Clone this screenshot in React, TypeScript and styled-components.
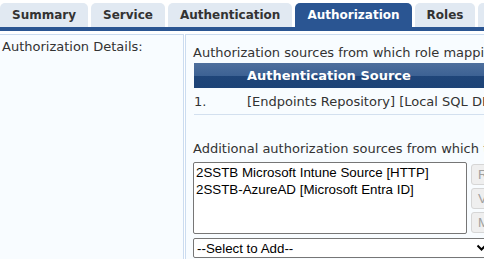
import styled, { createGlobalStyle } from "styled-components";

const GlobalStyle = createGlobalStyle`
  html, body {
    margin: 0;
    padding: 0;
    overflow: hidden;
    background: #ffffff;
  }
  body {
    font-family: "DejaVu Sans", Verdana, sans-serif;
    font-size: 13px;
    color: #333333;
  }
`;

const TabBar = styled.div`
  display: flex;
  align-items: flex-end;
  gap: 3px;
  padding-top: 3px;
  border-bottom: 4px solid #2a5592;
  white-space: nowrap;
`;

const Tab = styled.div<{ $active?: boolean }>`
  height: 24px;
  line-height: 24px;
  padding: 0 12px;
  flex-shrink: 0;
  border-radius: 5px 5px 0 0;
  font-size: 12px;
  font-weight: bold;
  background: ${(p) => (p.$active ? "#2a5592" : "#e1e9f2")};
  color: ${(p) => (p.$active ? "#ffffff" : "#333333")};
`;

const Content = styled.div`
  display: flex;
  gap: 1px;
  margin-top: 3px;
`;

const LabelCell = styled.div`
  width: 181px;
  flex-shrink: 0;
  padding: 4px 0 0 2px;
  border-top: 1px solid #cbdcf0;
  border-right: 1px solid #cbdcf0;
  background: #f8fcff;
  height: 260px;
  line-height: 16px;
`;

const ValueCell = styled.div`
  flex: 1;
  min-width: 0;
  padding: 10px 0 0 7px;
  border-top: 1px solid #cbdcf0;
  border-left: 1px solid #cbdcf0;
  background: #f8fcff;
  white-space: nowrap;
`;

const Caption = styled.div`
  line-height: 16px;
  margin-bottom: 2px;
`;

const SourceTable = styled.div`
  width: 420px;
  margin-left: 1px;
`;

const HeaderRow = styled.div`
  display: flex;
  height: 25px;
  align-items: center;
  background: linear-gradient(
    to bottom,
    #4e6f9d 0%,
    #3d6294 50%,
    #1f4579 52%,
    #1d4377 100%
  );
  color: #ffffff;
  font-weight: bold;
`;

const Row = styled.div`
  display: flex;
  height: 26px;
  align-items: center;
  border-bottom: 1px solid #d3e0ef;
`;

const IndexCol = styled.div`
  width: 53px;
  flex-shrink: 0;
`;

const NameCol = styled.div`
  flex: 1;
`;

const SubCaption = styled(Caption)`
  margin-top: 26px;
  margin-bottom: 5px;
`;

const ListRow = styled.div`
  display: flex;
  gap: 4px;
`;

const ListBox = styled.div`
  width: 272px;
  height: 69px;
  flex-shrink: 0;
  padding-top: 1px;
  border: 1px solid #767676;
  border-radius: 2px;
  background: #ffffff;
  font-family: "Liberation Sans", Arial, sans-serif;
  font-size: 13.33px;
  color: #000000;
`;

const Option = styled.div`
  padding: 0 2px;
  line-height: 17px;
`;

const ButtonCol = styled.div`
  display: flex;
  flex-direction: column;
  gap: 3px;
  padding-top: 2px;
`;

const SideButton = styled.div`
  height: 19px;
  width: 80px;
  padding-left: 6px;
  border: 1px solid #d6d6d6;
  border-radius: 3px;
  background: #efefef;
  color: #a0a0a0;
  font-family: "Liberation Sans", Arial, sans-serif;
  font-size: 13.33px;
  line-height: 19px;
`;

const Dropdown = styled.div`
  display: flex;
  align-items: center;
  justify-content: space-between;
  width: 290px;
  height: 18px;
  margin-top: 4px;
  padding: 0 4px 0 3px;
  border: 1px solid #767676;
  border-radius: 2px;
  background: #ffffff;
  font-family: "Liberation Sans", Arial, sans-serif;
  font-size: 13.33px;
  color: #000000;
`;

const tabs = [
  "Summary",
  "Service",
  "Authentication",
  "Authorization",
  "Roles",
  "Enforcement",
];

export default function App() {
  return (
    <>
      <GlobalStyle />
      <TabBar>
        {tabs.map((t) => (
          <Tab key={t} $active={t === "Authorization"}>
            {t}
          </Tab>
        ))}
      </TabBar>
      <Content>
        <LabelCell>Authorization Details:</LabelCell>
        <ValueCell>
          <Caption>
            Authorization sources from which role mapping attributes are
            fetched (for each Authentication Source)
          </Caption>
          <SourceTable>
            <HeaderRow>
              <IndexCol />
              <NameCol>Authentication Source</NameCol>
            </HeaderRow>
            <Row>
              <IndexCol>1.</IndexCol>
              <NameCol>[Endpoints Repository] [Local SQL DB]</NameCol>
            </Row>
          </SourceTable>
          <SubCaption>
            Additional authorization sources from which to fetch
            role-mapping attributes -
          </SubCaption>
          <ListRow>
            <ListBox>
              <Option>2SSTB Microsoft Intune Source [HTTP]</Option>
              <Option>2SSTB-AzureAD [Microsoft Entra ID]</Option>
            </ListBox>
            <ButtonCol>
              <SideButton>Remove</SideButton>
              <SideButton>View Details</SideButton>
              <SideButton>Modify</SideButton>
            </ButtonCol>
          </ListRow>
          <Dropdown>
            <span>--Select to Add--</span>
            <svg width="11" height="8" viewBox="0 0 11 8">
              <path
                d="M1.5 1.5 L5.5 5.5 L9.5 1.5"
                fill="none"
                stroke="#000"
                strokeWidth="2"
              />
            </svg>
          </Dropdown>
        </ValueCell>
      </Content>
    </>
  );
}
